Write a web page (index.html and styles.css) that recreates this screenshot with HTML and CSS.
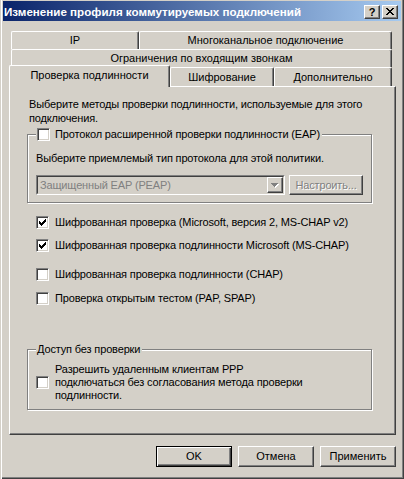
FILE: index.html
```
<!DOCTYPE html>
<html lang="ru">
<head>
<meta charset="utf-8">
<title>Изменение профиля коммутируемых подключений</title>
<link rel="stylesheet" href="styles.css">
</head>
<body>
<div class="window">
  <div class="titlebar">
    <div class="title">Изменение профиля коммутируемых подключений</div>
    <div class="capbtn help">?</div>
    <div class="capbtn close">
      <svg width="8" height="7" viewBox="0 0 8 7" shape-rendering="crispEdges"><path fill="#000" d="M0 0h2v1H0zM6 0h2v1H6zM1 1h2v1H1zM5 1h2v1H5zM2 2h4v1H2zM3 3h2v1H3zM2 4h4v1H2zM1 5h2v1H1zM5 5h2v1H5zM0 6h2v1H0zM6 6h2v1H6z"/></svg>
    </div>
  </div>

  <div class="tabs">
    <div class="tabrow">
      <div class="tab w-ip">IP</div>
      <div class="tab w-multi">Многоканальное подключение</div>
    </div>
    <div class="tabrow">
      <div class="tab w-full">Ограничения по входящим звонкам</div>
    </div>
    <div class="tabrow front">
      <div class="tab active w-auth">Проверка подлинности</div>
      <div class="tab w-enc">Шифрование</div>
      <div class="tab w-adv">Дополнительно</div>
    </div>
  </div>

  <div class="panel">
    <div class="intro">Выберите методы проверки подлинности, используемые для этого<br>подключения.</div>

    <fieldset class="group eap">
      <legend>
        <span class="cb"></span>
        <span>Протокол расширенной проверки подлинности (EAP)</span>
      </legend>
      <div class="gtext">Выберите приемлемый тип протокола для этой политики.</div>
      <div class="comborow">
        <div class="combo">
          <div class="combo-in">
            <span class="combo-text">Защищенный EAP (PEAP)</span>
            <span class="dd">
              <svg width="8" height="5" viewBox="0 0 8 5" shape-rendering="crispEdges"><path fill="#fff" d="M1 1h7v1H1zM2 2h5v1H2zM3 3h3v1H3zM4 4h1v1H4z"/><path fill="#808080" d="M0 0h7v1H0zM1 1h5v1H1zM2 2h3v1H2zM3 3h1v1H3z"/></svg>
            </span>
          </div>
        </div>
        <div class="btn disabled cfg">Настроить...</div>
      </div>
    </fieldset>

    <div class="check c1">
      <span class="cb"><svg width="7" height="7" viewBox="0 0 7 7" shape-rendering="crispEdges"><path fill="#000" d="M6 0h1v1H6zM5 1h2v1H5zM0 2h1v1H0zM4 2h3v1H4zM0 3h2v1H0zM3 3h3v1H3zM0 4h5v1H0zM1 5h3v1H1zM2 6h1v1H2z"/></svg></span>
      <span>Шифрованная проверка (Microsoft, версия 2, MS-CHAP v2)</span>
    </div>
    <div class="check c2">
      <span class="cb"><svg width="7" height="7" viewBox="0 0 7 7" shape-rendering="crispEdges"><path fill="#000" d="M6 0h1v1H6zM5 1h2v1H5zM0 2h1v1H0zM4 2h3v1H4zM0 3h2v1H0zM3 3h3v1H3zM0 4h5v1H0zM1 5h3v1H1zM2 6h1v1H2z"/></svg></span>
      <span>Шифрованная проверка подлинности Microsoft (MS-CHAP)</span>
    </div>
    <div class="check c3">
      <span class="cb"></span>
      <span>Шифрованная проверка подлинности (CHAP)</span>
    </div>
    <div class="check c4">
      <span class="cb"></span>
      <span>Проверка открытым тестом (PAP, SPAP)</span>
    </div>

    <fieldset class="group noauth">
      <legend><span>Доступ без проверки</span></legend>
      <div class="nocheck">
        <span class="cb"></span>
        <span class="ntext">Разрешить удаленным клиентам PPP<br>подключаться без согласования метода проверки<br>подлинности.</span>
      </div>
    </fieldset>
  </div>

  <div class="buttons">
    <div class="btn default">OK</div>
    <div class="btn">Отмена</div>
    <div class="btn">Применить</div>
  </div>
</div>
</body>
</html>
```
FILE: styles.css
```
* { box-sizing: border-box; }
html, body { margin: 0; padding: 0; }
body {
  background: #d4d0c8;
  font-family: "Liberation Sans", Arial, sans-serif;
  font-size: 11px;
  line-height: 13px;
  color: #000;
}
.window {
  width: 404px;
  height: 479px;
  padding: 1px 3px 3px 3px;
  display: flex;
  flex-direction: column;
  background: #d4d0c8;
  box-shadow: inset 1px 0 0 #d4d0c8, inset 2px 0 0 #fff, inset -1px -1px 0 #404040, inset -2px -2px 0 #808080;
}
.titlebar {
  height: 20px;
  flex: none;
  display: flex;
  align-items: center;
  padding: 1px 3px 0 1px;
  background: linear-gradient(to right, #0a246a, #a6caf0);
  color: #fff;
  font-weight: bold;
  font-size: 11.6px;
}
.title { flex: 1; white-space: nowrap; overflow: hidden; }
.capbtn {
  width: 16px;
  height: 14px;
  flex: none;
  background: #d4d0c8;
  border: 1px solid;
  border-color: #fff #404040 #404040 #fff;
  box-shadow: inset -1px -1px 0 #808080;
  display: flex;
  align-items: center;
  justify-content: center;
  color: #000;
  font-size: 11px;
  line-height: 12px;
}
.capbtn.help { margin-right: 2px; }

.tabs { margin: 10px 5px 0 6px; flex: none; }
.tabrow { display: flex; padding: 0 4px 0 2px; }
.tab {
  height: 18px;
  flex: none;
  border-top: 1px solid #fff;
  border-left: 1px solid #fff;
  border-right: 1px solid #404040;
  box-shadow: inset -1px 0 0 #808080;
  border-radius: 2px 2px 0 0;
  display: flex;
  align-items: center;
  justify-content: center;
  white-space: nowrap;
  background: #d4d0c8;
}
.front .tab { height: 19px; }
.front .tab.active {
  height: 22px;
  margin: -2px 0 -1px -2px;
  position: relative;
  z-index: 1;
  padding-bottom: 2px;
}
.w-ip { width: 128px; }
.w-multi { width: 253px; }
.w-full { width: 381px; }
.w-auth { width: 161px; }
.w-enc { width: 104px; }
.w-adv { width: 118px; }

.panel {
  margin: 0 5px 0 6px;
  height: 349px;
  flex: none;
  border: 1px solid;
  border-color: #fff #404040 #404040 #fff;
  box-shadow: inset -1px -1px 0 #808080;
  padding: 10px 0 0 17px;
  font-size: 11px;
  letter-spacing: -0.15px;
}
.intro { margin-left: 2px; line-height: 14px; white-space: nowrap; }

.group {
  margin: 3px 0 0 0;
  width: 345px;
  min-width: 0;
  border: 1px solid #808080;
  box-shadow: inset 1px 1px 0 #fff, 1px 1px 0 #fff;
  padding: 0 8px 7px 8px;
}
.group legend {
  padding: 0 2px 0 1px;
  background: #d4d0c8;
  display: flex;
  align-items: center;
  gap: 5px;
  line-height: 13px;
  white-space: nowrap;
}
.gtext { margin-top: 10px; line-height: 14px; white-space: nowrap; }
.comborow { display: flex; gap: 4px; margin-top: 10px; }
.combo {
  width: 249px;
  height: 20px;
  border: 1px solid;
  border-color: #808080 #fff #fff #808080;
}
.combo-in {
  height: 100%;
  border: 1px solid;
  border-color: #404040 #d4d0c8 #d4d0c8 #404040;
  display: flex;
  align-items: center;
}
.combo-text { flex: 1; padding-left: 2px; color: #808080; white-space: nowrap; }
.dd {
  width: 16px;
  height: 16px;
  flex: none;
  border: 1px solid;
  border-color: #fff #404040 #404040 #fff;
  box-shadow: inset -1px -1px 0 #808080;
  display: flex;
  align-items: center;
  justify-content: center;
  padding-top: 1px;
}

.cb {
  width: 13px;
  height: 13px;
  flex: none;
  background: #fff;
  border: 1px solid;
  border-color: #808080 #fff #fff #808080;
  box-shadow: inset 1px 1px 0 #404040, inset -1px -1px 0 #d4d0c8;
  padding: 2px;
  display: flex;
}
.check {
  display: flex;
  align-items: center;
  gap: 6px;
  height: 13px;
  margin-left: 9px;
  white-space: nowrap;
}
.c1 { margin-top: 13px; }
.c2 { margin-top: 10px; }
.c3 { margin-top: 16px; }
.c4 { margin-top: 11px; }

.noauth { margin-top: 38px; }
.nocheck { display: flex; align-items: center; gap: 6px; margin-top: 7px; }
.ntext { line-height: 13px; white-space: nowrap; }

.btn {
  width: 76px;
  height: 21px;
  flex: none;
  border: 1px solid;
  border-color: #fff #404040 #404040 #fff;
  box-shadow: inset -1px -1px 0 #808080;
  display: flex;
  align-items: center;
  justify-content: center;
  white-space: nowrap;
}
.btn.default {
  border: 1px solid #000;
  box-shadow: inset 1px 1px 0 #fff, inset -1px -1px 0 #404040, inset -2px -2px 0 #808080;
}
.btn.cfg { width: 74px; height: 20px; }
.btn.disabled { color: #808080; text-shadow: 1px 1px 0 #fff; }
.buttons {
  display: flex;
  justify-content: flex-end;
  gap: 6px;
  margin: 11px 5px 0 0;
  flex: none;
}
```
